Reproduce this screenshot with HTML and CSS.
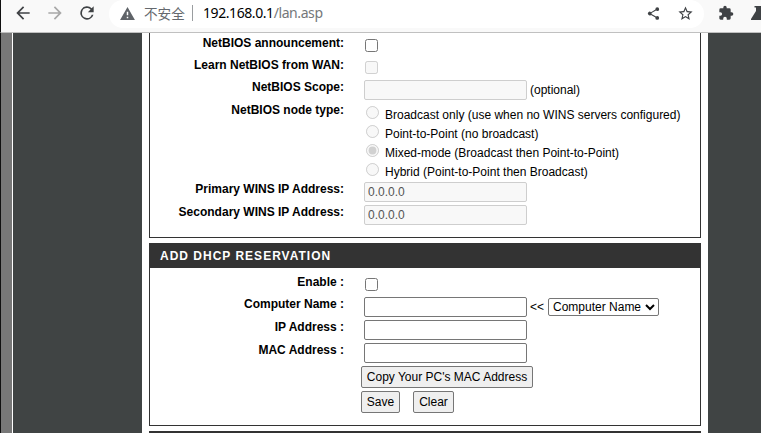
FILE: index.html
```
<!DOCTYPE html>
<html lang="en">
<head>
<meta charset="utf-8">
<title>LAN</title>
<link rel="stylesheet" href="styles.css">
</head>
<body>
<header class="toolbar">
  <svg class="nav" viewBox="0 0 24 24"><path d="M20 11H7.800l5.600-5.600L12 4l-8 8 8 8 1.400-1.400L7.800 13H20z"/></svg>
  <svg class="nav nav-off" viewBox="0 0 24 24"><path d="M4 11h12.200l-5.600-5.600L12 4l8 8-8 8-1.400-1.400 5.600-5.600H4z"/></svg>
  <svg class="nav" viewBox="0 0 24 24"><path d="M17.650 6.350A8 8 0 1 0 19.730 14h-2.080A6 6 0 1 1 12 6c1.660 0 3.140.69 4.220 1.780L13 11h7V4z"/></svg>
  <div class="omnibox">
    <svg class="warn" viewBox="0 0 16 14"><path fill-rule="evenodd" d="M8 0l8 14H0zM7.200 5v4h1.600V5zM7.200 10.400V12h1.600v-1.600z"/></svg>
    <span class="insecure">不安全</span>
    <span class="divider"></span>
    <span class="url">192.168.0.1<span class="path">/lan.asp</span></span>
    <svg class="share" viewBox="0 0 24 24"><path d="M18 16.100c-.8 0-1.400.3-2 .8l-7.100-4.200c.1-.2.1-.5.1-.7s0-.5-.1-.7L16 7.200c.5.5 1.200.8 2 .8a3 3 0 1 0-3-3c0 .2 0 .5.1.7L8 9.800A3 3 0 1 0 8 14.200l7.100 4.200c-.1.200-.1.400-.1.600a3 3 0 1 0 3-2.900z"/></svg>
    <svg class="star" viewBox="0 0 24 24"><path d="M22 9.240l-7.190-.62L12 2 9.190 8.630 2 9.240l5.460 4.730L5.820 21 12 17.270 18.180 21l-1.630-7.030zM12 15.400l-3.760 2.270 1-4.280-3.320-2.880 4.380-.38L12 6.100l1.710 4.040 4.380.38-3.320 2.880 1 4.280z"/></svg>
  </div>
  <svg class="puzzle" viewBox="0 0 24 24"><path d="M20.500 11H19V7a2 2 0 0 0-2-2h-4V3.500a2.500 2.500 0 0 0-5 0V5H4a2 2 0 0 0-2 2v3.800h1.500a2.700 2.700 0 0 1 0 5.400H2V20c0 1.100.9 2 2 2h3.800v-1.500a2.700 2.700 0 0 1 5.400 0V22H17a2 2 0 0 0 2-2v-4h1.500a2.500 2.500 0 0 0 0-5z"/></svg>
  <svg class="flask" viewBox="0 0 16 14"><path d="M3.500 0h9v1.500H11V5l5 8v1H0v-1l5-8V1.500H3.500z"/></svg>
</header>
<div class="page">
  <div class="edge"></div>
  <div class="side"></div>
  <main class="content">
    <section class="box box-top">
      <div class="row"><label>NetBIOS announcement:</label><div class="field"><input type="checkbox"></div></div>
      <div class="row"><label>Learn NetBIOS from WAN:</label><div class="field"><input type="checkbox" disabled></div></div>
      <div class="row tall"><label>NetBIOS Scope:</label><div class="field"><input type="text" disabled><span class="note">(optional)</span></div></div>
      <div class="row radios"><label>NetBIOS node type:</label>
        <div class="options">
          <div class="option"><input type="radio" name="node" disabled><span>Broadcast only (use when no WINS servers configured)</span></div>
          <div class="option"><input type="radio" name="node" disabled><span>Point-to-Point (no broadcast)</span></div>
          <div class="option"><input type="radio" name="node" disabled checked><span>Mixed-mode (Broadcast then Point-to-Point)</span></div>
          <div class="option"><input type="radio" name="node" disabled><span>Hybrid (Point-to-Point then Broadcast)</span></div>
        </div>
      </div>
      <div class="row tall"><label>Primary WINS IP Address:</label><div class="field"><input type="text" value="0.0.0.0" disabled></div></div>
      <div class="row tall"><label>Secondary WINS IP Address:</label><div class="field"><input type="text" value="0.0.0.0" disabled></div></div>
    </section>
    <h2>ADD DHCP RESERVATION</h2>
    <section class="box box-add">
      <div class="row"><label>Enable :</label><div class="field"><input type="checkbox"></div></div>
      <div class="row tall"><label>Computer Name :</label><div class="field"><input type="text"><span class="note">&lt;&lt;</span><select><option>Computer Name</option></select></div></div>
      <div class="row tall"><label>IP Address :</label><div class="field"><input type="text"></div></div>
      <div class="row tall"><label>MAC Address :</label><div class="field"><input type="text"></div></div>
      <div class="buttons"><button class="copy">Copy Your PC's MAC Address</button></div>
      <div class="buttons"><button class="save">Save</button><button class="clear">Clear</button></div>
    </section>
    <h2></h2>
  </main>
  <div class="side-right"></div>
</div>
</body>
</html>
```
FILE: styles.css
```
* { box-sizing: border-box; }
body {
  margin: 0;
  width: 761px;
  height: 433px;
  overflow: hidden;
  background: #fff;
  color: #000;
  font: 12px/18px "Liberation Sans", Arial, sans-serif;
}
.toolbar {
  display: flex;
  align-items: flex-start;
  height: 33px;
  padding-left: 12px;
  overflow: hidden;
  background: #f9f9f9;
  border-bottom: 1px solid #c0c0c0;
  border-left: 1px solid #111;
}
svg { flex: none; fill: #3f4245; }
.nav { width: 20px; height: 20px; margin: 3px 12px 0 0; }
.nav-off { fill: #a8a8a8; }
.omnibox {
  display: flex;
  flex: none;
  align-items: center;
  width: 595px;
  height: 28px;
  padding: 0 10px 2px 11px;
  background: #fff;
  border-radius: 14px;
}
.warn { width: 15px; height: 13px; fill: #5f6368; }
.insecure {
  flex: none;
  width: 41px;
  margin-left: 9px;
  color: #65696e;
  font: 13.6px/20px "Noto Sans CJK SC", sans-serif;
  white-space: nowrap;
}
.divider { flex: none; width: 1px; height: 16px; margin: 0 10px 0 7px; background: #9a9da0; }
.url { flex: 1; font: 14px/20px "Noto Sans", sans-serif; letter-spacing: -.42px; }
.path { color: #74777a; }
.share { width: 15px; height: 15px; }
.star { width: 17px; height: 17px; margin-left: 16px; }
.puzzle { width: 16px; height: 16px; margin: 5px 0 0 14px; }
.flask { width: 16px; height: 14px; margin: 6px 0 0 17px; }
.page {
  display: grid;
  grid-template-columns: 13px 129px 566px 53px;
  height: 400px;
}
.edge { background: #787878; border-left: 1px solid #111; border-right: 1px solid #fff; }
.side, .side-right { background: #404444; }
.content { padding: 0 7px; overflow: hidden; }
.box { border: 1px solid #333; border-top: 0; background: #fff; }
.box-top { height: 205px; padding-top: 1px; }
.box-add { height: 158px; padding-top: 5px; }
h2 {
  height: 25px;
  margin: 5px 0 0;
  padding-left: 11px;
  background: #333;
  color: #fff;
  font-size: 12px;
  line-height: 26px;
  letter-spacing: 1px;
}
.row { display: grid; grid-template-columns: 194px 1fr; column-gap: 17px; height: 22px; }
.row.tall { height: 23px; }
.row.radios { height: 79px; }
label { font-weight: bold; text-align: right; white-space: nowrap; }
.field { display: flex; align-items: flex-start; }
input[type="checkbox"] { width: 13px; height: 13px; margin: 5px 0 0 4px; }
input[type="text"] {
  width: 163px;
  height: 20px;
  margin: 2px 0 0 3px;
  padding: 1px 3px;
  border: 1px solid #767676;
  border-radius: 2px;
  background: #fff;
  font: inherit;
}
input[type="text"]:disabled { background: #f8f8f8; border-color: #cecece; color: #545454; }
.note { margin: 3px 3px 0; }
select {
  width: 111px;
  height: 18px;
  margin: 3px 0 0 1px;
  padding: 0;
  border: 1px solid #767676;
  border-radius: 2px;
  background: #fff;
  font: 12px "Liberation Sans", Arial, sans-serif;
}
.options { padding-top: 4px; }
.option { display: flex; height: 19px; white-space: nowrap; }
.option input { width: 13px; height: 13px; margin: 1px 6px 0 5px; }
.option span { padding-top: 1px; }
.buttons { display: flex; gap: 13px; height: 25px; margin-left: 211px; padding-top: 2px; }
button {
  height: 22px;
  padding: 0;
  border: 1px solid #767676;
  border-radius: 2px;
  background: #efefef;
  font: 12px "Liberation Sans", Arial, sans-serif;
  white-space: nowrap;
}
.copy { width: 172px; }
.save { width: 39px; }
.clear { width: 41px; }
```
